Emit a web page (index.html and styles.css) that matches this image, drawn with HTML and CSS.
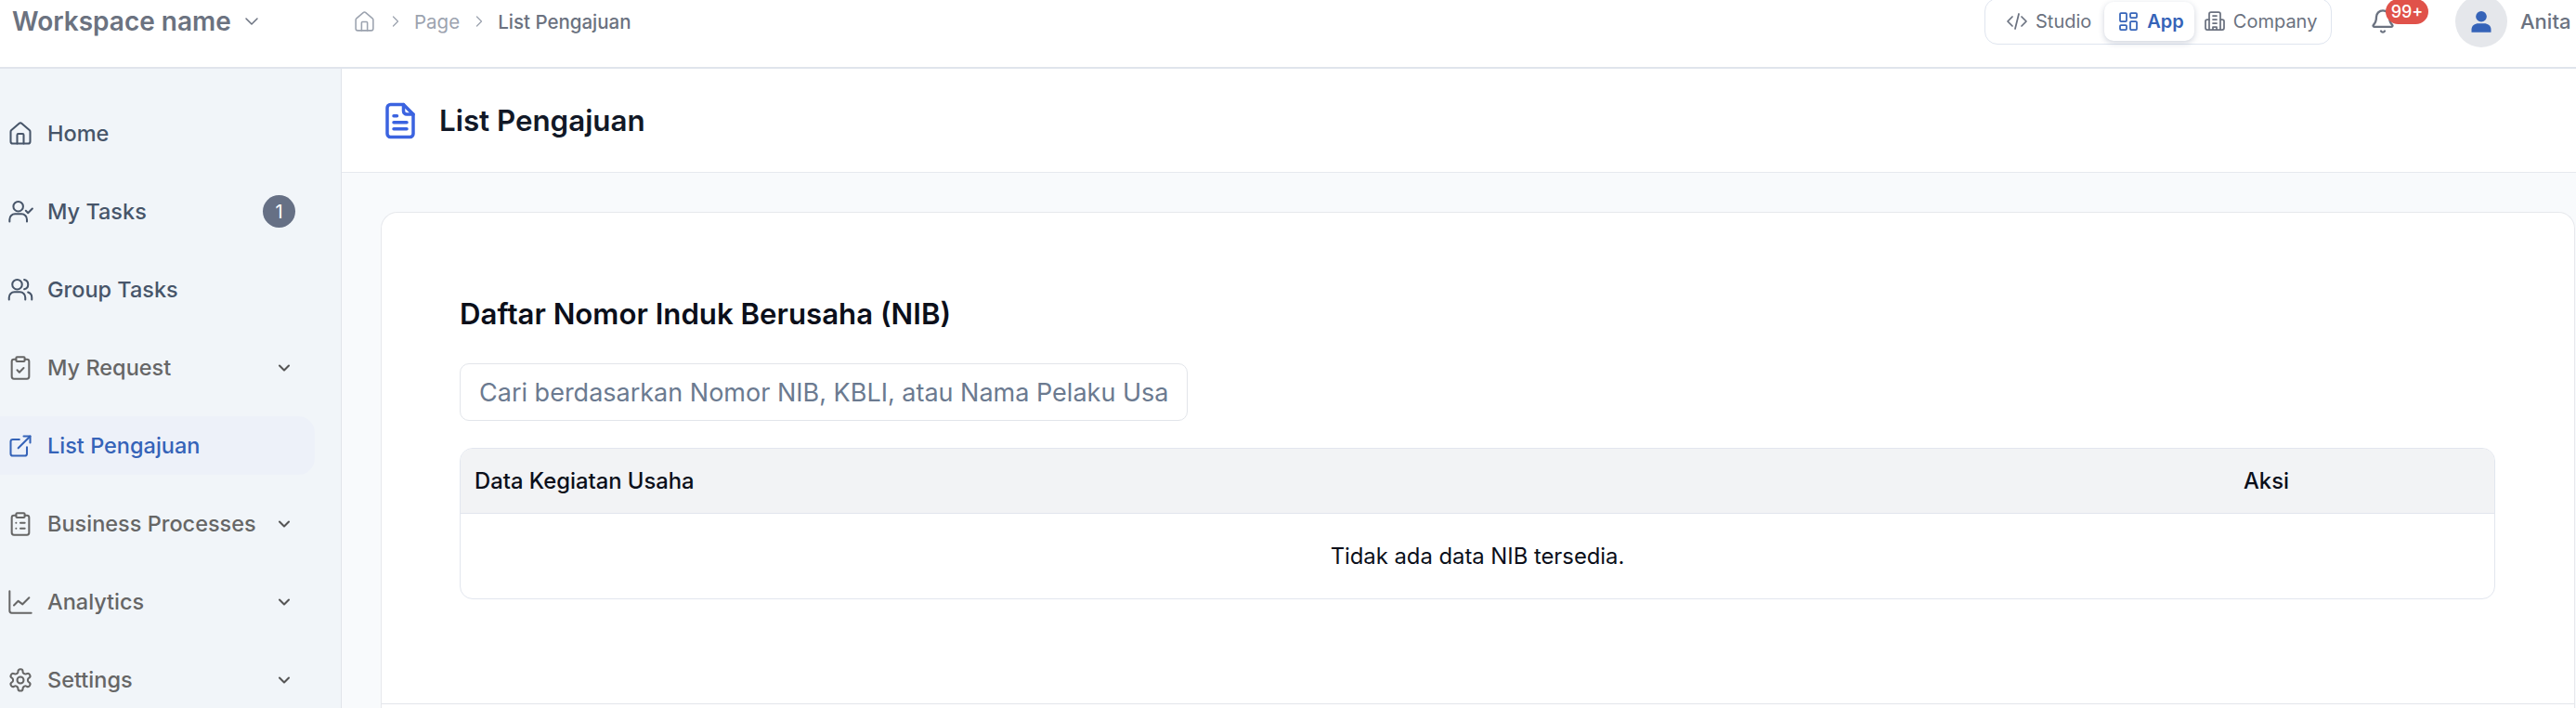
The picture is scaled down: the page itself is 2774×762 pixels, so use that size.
FILE: index.html
```html
<!DOCTYPE html>
<html>
<head>
  <title>List Pengajuan</title>
  <link rel="stylesheet" href="styles.css">
</head>
<body>
  <div class="topbar">
    <div class="workspace">
      <span class="workspace-name">Workspace name</span>
      <svg class="workspace-chevron" viewBox="0 0 24 24"><path d="m6 9 6 6 6-6"/></svg>
    </div>
    <div class="breadcrumb">
      <svg class="crumb-home" viewBox="0 0 24 24"><path d="M15 21v-8a1 1 0 0 0-1-1h-4a1 1 0 0 0-1 1v8"/><path d="M3 10a2 2 0 0 1 .7-1.5l7-6a2 2 0 0 1 2.6 0l7 6a2 2 0 0 1 .7 1.5v9a2 2 0 0 1-2 2H5a2 2 0 0 1-2-2z"/></svg>
      <svg class="crumb-sep" viewBox="0 0 24 24"><path d="m9 18 6-6-6-6"/></svg>
      <span class="crumb-muted">Page</span>
      <svg class="crumb-sep" viewBox="0 0 24 24"><path d="m9 18 6-6-6-6"/></svg>
      <span class="crumb-current">List Pengajuan</span>
    </div>
    <div class="topbar-right">
      <div class="switcher">
        <div class="switch-item switch-studio">
          <svg class="switch-icon" viewBox="0 0 24 24"><path d="m7 7-5 5 5 5"/><path d="m17 7 5 5-5 5"/><path d="m14 4-4 16"/></svg>
          <span>Studio</span>
        </div>
        <div class="switch-item switch-active">
          <svg class="switch-icon" viewBox="0 0 24 24"><rect x="3" y="3" width="7" height="9" rx="1"/><rect x="14" y="3" width="7" height="5" rx="1"/><rect x="14" y="12" width="7" height="9" rx="1"/><rect x="3" y="16" width="7" height="5" rx="1"/></svg>
          <span>App</span>
        </div>
        <div class="switch-item switch-company">
          <svg class="switch-icon" viewBox="0 0 24 24"><path d="M6 21V4a2 2 0 0 1 2-2h8a2 2 0 0 1 2 2v17"/><path d="M6 10H4a2 2 0 0 0-2 2v7a2 2 0 0 0 2 2h16a2 2 0 0 0 2-2v-7a2 2 0 0 0-2-2h-2"/><path d="M10 6h4M10 10h4M10 14h4M10 21v-3h4v3"/></svg>
          <span>Company</span>
        </div>
      </div>
      <div class="bell">
        <svg class="bell-icon" viewBox="0 0 24 24"><path d="M10.3 21a2 2 0 0 0 3.4 0"/><path d="M3.3 15.3A1 1 0 0 0 4 17h16a1 1 0 0 0 .7-1.7C19.4 14 18 12.500 18 8A6 6 0 0 0 6 8c0 4.500-1.400 6-2.700 7.300"/></svg>
        <span class="bell-badge">99+</span>
      </div>
      <div class="avatar">
        <svg class="avatar-icon" viewBox="0 0 24 24"><circle cx="12" cy="7.500" r="5"/><path d="M3 22v-2.500C3 16 6 14 9.500 14h5c3.500 0 6.500 2 6.500 5.500V22z"/></svg>
      </div>
      <span class="user-name">Anita</span>
    </div>
  </div>

  <div class="layout">
    <div class="sidebar">
      <div class="nav-item">
        <svg class="nav-icon" viewBox="0 0 24 24"><path d="M15 21v-8a1 1 0 0 0-1-1h-4a1 1 0 0 0-1 1v8"/><path d="M3 10a2 2 0 0 1 .7-1.5l7-6a2 2 0 0 1 2.600 0l7 6a2 2 0 0 1 .7 1.500v9a2 2 0 0 1-2 2H5a2 2 0 0 1-2-2z"/></svg>
        <span class="nav-label">Home</span>
      </div>
      <div class="nav-item">
        <svg class="nav-icon" viewBox="0 0 24 24"><circle cx="10" cy="7" r="4.500"/><path d="M2 21v-2a5 5 0 0 1 5-5h6a5 5 0 0 1 5 5v2"/><path d="m17 11 2 2 4-4"/></svg>
        <span class="nav-label">My Tasks</span>
        <span class="nav-count">1</span>
      </div>
      <div class="nav-item">
        <svg class="nav-icon" viewBox="0 0 24 24"><circle cx="9" cy="7" r="4.500"/><path d="M1.500 21v-2a5 5 0 0 1 5-5h5a5 5 0 0 1 5 5v2"/><path d="M15.500 2.600a4.500 4.500 0 0 1 0 8.800"/><path d="M22.500 21v-2a5 5 0 0 0-3.500-4.800"/></svg>
        <span class="nav-label">Group Tasks</span>
      </div>
      <div class="nav-item">
        <svg class="nav-icon nav-icon-grey" viewBox="0 0 24 24"><rect x="8" y="2" width="8" height="4" rx="1"/><path d="M16 4h2a2 2 0 0 1 2 2v14a2 2 0 0 1-2 2H6a2 2 0 0 1-2-2V6a2 2 0 0 1 2-2h2"/><path d="m9 14 2 2 4-4"/></svg>
        <span class="nav-label nav-label-grey">My Request</span>
        <svg class="nav-chevron" viewBox="0 0 24 24"><path d="m6 9 6 6 6-6"/></svg>
      </div>
      <div class="nav-item nav-item-active">
        <svg class="nav-icon" viewBox="0 0 24 24"><path d="M15 3h6v6"/><path d="M10 14 21 3"/><path d="M18 13v6a2 2 0 0 1-2 2H5a2 2 0 0 1-2-2V8a2 2 0 0 1 2-2h6"/></svg>
        <span class="nav-label">List Pengajuan</span>
      </div>
      <div class="nav-item">
        <svg class="nav-icon nav-icon-grey" viewBox="0 0 24 24"><rect x="8" y="2" width="8" height="4" rx="1"/><path d="M16 4h2a2 2 0 0 1 2 2v14a2 2 0 0 1-2 2H6a2 2 0 0 1-2-2V6a2 2 0 0 1 2-2h2"/><path d="M12 11h4M12 16h4M8 11h.01M8 16h.01"/></svg>
        <span class="nav-label nav-label-grey">Business Processes</span>
        <svg class="nav-chevron" viewBox="0 0 24 24"><path d="m6 9 6 6 6-6"/></svg>
      </div>
      <div class="nav-item">
        <svg class="nav-icon nav-icon-grey" viewBox="0 0 24 24"><path d="M2 2v18a2 2 0 0 0 2 2h18"/><path d="m6 15 4-4 4 3 6-6"/></svg>
        <span class="nav-label nav-label-grey">Analytics</span>
        <svg class="nav-chevron" viewBox="0 0 24 24"><path d="m6 9 6 6 6-6"/></svg>
      </div>
      <div class="nav-item">
        <svg class="nav-icon nav-icon-grey" viewBox="0 0 24 24"><path d="M12.200 2h-.4a2 2 0 0 0-2 2v.2a2 2 0 0 1-1 1.700l-.4.300a2 2 0 0 1-2 0l-.2-.1a2 2 0 0 0-2.700.7l-.2.400a2 2 0 0 0 .7 2.700l.2.100a2 2 0 0 1 1 1.700v.5a2 2 0 0 1-1 1.700l-.2.100a2 2 0 0 0-.7 2.700l.2.400a2 2 0 0 0 2.700.7l.2-.1a2 2 0 0 1 2 0l.4.300a2 2 0 0 1 1 1.700v.2a2 2 0 0 0 2 2h.4a2 2 0 0 0 2-2v-.2a2 2 0 0 1 1-1.700l.4-.3a2 2 0 0 1 2 0l.2.100a2 2 0 0 0 2.700-.7l.2-.4a2 2 0 0 0-.7-2.700l-.2-.1a2 2 0 0 1-1-1.700v-.5a2 2 0 0 1 1-1.700l.2-.1a2 2 0 0 0 .7-2.700l-.2-.4a2 2 0 0 0-2.700-.7l-.2.100a2 2 0 0 1-2 0l-.4-.3a2 2 0 0 1-1-1.700V4a2 2 0 0 0-2-2z"/><circle cx="12" cy="12" r="3"/></svg>
        <span class="nav-label nav-label-grey">Settings</span>
        <svg class="nav-chevron" viewBox="0 0 24 24"><path d="m6 9 6 6 6-6"/></svg>
      </div>
    </div>

    <div class="main">
      <div class="page-header">
        <svg class="page-icon" viewBox="0 0 24 24"><path d="M14 2H6a2 2 0 0 0-2 2v16a2 2 0 0 0 2 2h12a2 2 0 0 0 2-2V8z"/><path d="M14 2v4a2 2 0 0 0 2 2h4"/><path d="M8 9h2M8 13h8M8 17h8"/></svg>
        <h1 class="page-title">List Pengajuan</h1>
      </div>
      <div class="page-body">
        <div class="card">
          <div class="card-content">
            <h2 class="card-title">Daftar Nomor Induk Berusaha (NIB)</h2>
            <input class="search-input" type="text" placeholder="Cari berdasarkan Nomor NIB, KBLI, atau Nama Pelaku Usaha">
            <table class="nib-table">
              <thead>
                <tr>
                  <th>Data Kegiatan Usaha</th>
                  <th class="col-action">Aksi</th>
                </tr>
              </thead>
              <tbody>
                <tr>
                  <td colspan="2" class="empty-row">Tidak ada data NIB tersedia.</td>
                </tr>
              </tbody>
            </table>
          </div>
          <div class="card-footer"></div>
        </div>
      </div>
    </div>
  </div>
</body>
</html>
```

FILE: styles.css
```css
:root {
  --primary: #3563b8;
  --text: #4b5563;
  --text-light: #6b7280;
  --border: #e2e6ee;
  --sidebar: #f1f5f9;
}

html, body {
  height: 100%;
}

body {
  margin: 0;
  height: 762px;
  overflow: hidden;
  font-family: 'Inter', 'Liberation Sans', sans-serif;
  color: var(--text);
  background: #fff;
}

svg {
  fill: none;
  stroke: currentColor;
  stroke-width: 2;
  stroke-linecap: round;
  stroke-linejoin: round;
  flex-shrink: 0;
}

.topbar {
  display: flex;
  align-items: center;
  height: 74px;
  box-sizing: border-box;
  padding: 0 0 26px 13px;
  border-bottom: 2px solid #e0e4ec;
  background: #fff;
}

.workspace {
  display: flex;
  align-items: center;
  width: 367px;
  flex-shrink: 0;
}

.workspace-name {
  font-size: 28px;
  font-weight: 600;
  color: var(--text-light);
}

.workspace-chevron {
  width: 24px;
  height: 24px;
  margin-left: 10px;
  color: #6b7280;
  stroke-width: 1.500;
}

.breadcrumb {
  display: flex;
  align-items: center;
  font-size: 20.500px;
}

.crumb-home {
  width: 25px;
  height: 25px;
  color: #9ca3af;
  stroke-width: 1.500;
}

.crumb-sep {
  width: 20px;
  height: 20px;
  margin: 0 10.500px;
  color: #9ca3af;
  stroke-width: 1.500;
}

.crumb-muted {
  color: #9ca3af;
}

.crumb-current {
  color: var(--text-light);
  font-weight: 500;
}

.topbar-right {
  display: flex;
  align-items: center;
  margin-left: auto;
  width: 637px;
  flex-shrink: 0;
  font-size: 20px;
  overflow: visible;
}

.switcher {
  display: flex;
  align-items: center;
  width: 374px;
  height: 50px;
  box-sizing: border-box;
  padding: 0 12px 0 22px;
  border: 1px solid #dfe5ef;
  border-radius: 14px;
  color: var(--text-light);
}

.switch-item {
  display: flex;
  align-items: center;
  gap: 8px;
}

.switch-icon {
  width: 24px;
  height: 24px;
  stroke-width: 1.750;
}

.switch-active {
  height: 42px;
  margin: 0 10px 0 14px;
  padding: 0 11px 0 14px;
  border-radius: 10px;
  background: #fff;
  color: var(--primary);
  font-weight: 600;
  box-shadow: 0 2px 6px rgba(30, 50, 90, 0.22);
}

.bell {
  position: relative;
  display: flex;
  margin-left: 41px;
}

.bell-icon {
  width: 28px;
  height: 28px;
  color: var(--text-light);
}

.bell-badge {
  position: absolute;
  left: 17px;
  top: -10px;
  width: 46px;
  height: 27px;
  line-height: 27px;
  border-radius: 14px;
  text-align: center;
  font-size: 18px;
  font-weight: 500;
  color: #fff;
  background: #e0524a;
}

.avatar {
  display: flex;
  align-items: center;
  justify-content: center;
  width: 56px;
  height: 56px;
  margin-left: 64px;
  border-radius: 50%;
  background: #e5e7eb;
  flex-shrink: 0;
}

.avatar-icon {
  width: 28px;
  height: 28px;
  fill: var(--primary);
  stroke: none;
}

.user-name {
  margin-left: 14px;
  font-size: 22px;
  font-weight: 500;
  color: var(--text-light);
  white-space: nowrap;
}

.layout {
  display: flex;
  height: 688px;
}

.sidebar {
  display: flex;
  flex-direction: column;
  gap: 21px;
  width: 368px;
  box-sizing: border-box;
  flex-shrink: 0;
  padding-top: 38px;
  background: var(--sidebar);
  border-right: 1px solid #e0e4ea;
  overflow: hidden;
}

.nav-item {
  display: flex;
  align-items: center;
  width: 339px;
  height: 63px;
  flex-shrink: 0;
  box-sizing: border-box;
  padding-left: 8px;
  border-radius: 0 18px 18px 0;
  color: #475569;
}

.nav-item-active {
  background: #edf1f9;
  color: var(--primary);
}

.nav-icon {
  width: 28px;
  height: 28px;
  stroke-width: 1.750;
}

.nav-icon-grey {
  color: #666;
}

.nav-label {
  margin-left: 15px;
  font-size: 23.500px;
  font-weight: 450;
}

.nav-label-grey {
  color: #666;
}

.nav-count {
  display: flex;
  align-items: center;
  justify-content: center;
  width: 35px;
  height: 35px;
  margin-left: auto;
  margin-right: 21px;
  border-radius: 50%;
  background: #667085;
  color: #fff;
  font-size: 20px;
}

.nav-chevron {
  width: 20px;
  height: 20px;
  margin-left: auto;
  margin-right: 23px;
  color: #555;
  stroke-width: 2.500;
}

.main {
  flex: 1;
  min-width: 0;
  display: flex;
  flex-direction: column;
  background: #f8fafc;
}

.page-header {
  display: flex;
  align-items: center;
  height: 112px;
  flex-shrink: 0;
  box-sizing: border-box;
  padding: 0 0 0 42px;
  background: #fff;
  border-bottom: 1px solid #e6e9ee;
}

.page-icon {
  width: 42px;
  height: 42px;
  color: #3b63e0;
}

.page-title {
  margin: 0 0 0 21px;
  font-size: 31.300px;
  font-weight: 600;
  color: #111827;
}

.page-body {
  flex: 1;
  padding: 42px 1px 0 42px;
}

.card {
  height: 100%;
  box-sizing: border-box;
  background: #fff;
  border: 1px solid #e6e8ec;
  border-bottom: none;
  border-radius: 18px 18px 0 0;
}

.card-content {
  height: 529px;
  box-sizing: border-box;
  padding: 88px 85px 0 84px;
  border-bottom: 1px solid #e2e5ea;
}

.card-title {
  margin: 0 0 32px;
  font-size: 31.200px;
  line-height: 42px;
  font-weight: 600;
  color: #0b0f1a;
}

.search-input {
  display: block;
  width: 784px;
  height: 62px;
  box-sizing: border-box;
  padding: 0 20px;
  border: 1px solid #e2e5ea;
  border-radius: 10px;
  font-family: inherit;
  font-size: 27px;
  color: #333;
  margin-bottom: 29px;
}

.search-input::placeholder {
  color: #6b7a90;
  opacity: 1;
}

.nib-table {
  width: 100%;
  border-collapse: separate;
  border-spacing: 0;
  border: 1px solid var(--border);
  border-radius: 14px;
  overflow: hidden;
  font-size: 23.800px;
  color: #0b0f1a;
}

.nib-table th {
  height: 69px;
  padding: 0 15px;
  text-align: left;
  font-weight: 500;
  background: #f2f3f5;
  border-bottom: 1px solid var(--border);
}

.nib-table .col-action {
  width: 255px;
}

.empty-row {
  height: 89px;
  text-align: center;
}
```
